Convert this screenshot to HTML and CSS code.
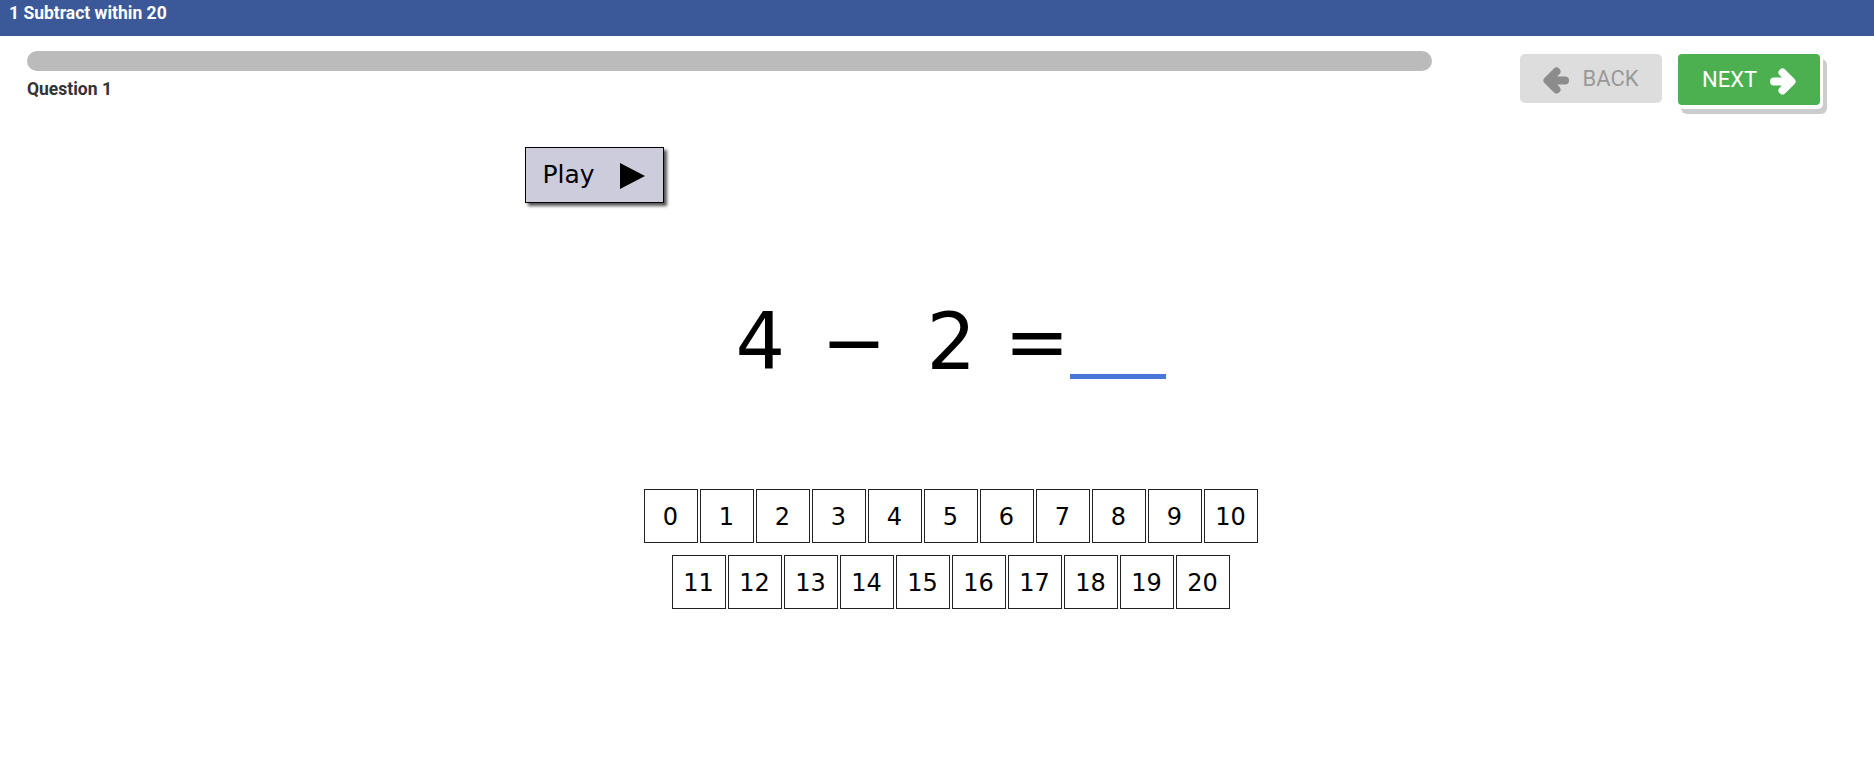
FILE: index.html
```html
<!DOCTYPE html>
<html lang="en">
<head>
  <meta charset="UTF-8">
  <meta name="viewport" content="width=device-width, initial-scale=1.0">
  <title>1 Subtract within 20</title>
  <link rel="stylesheet" href="styles.css">
</head>
<body>
  <header class="topbar">1 Subtract within 20</header>
  <main class="quiz">
    <div class="quiz-head">
      <div class="progress-wrap">
        <div class="progress"></div>
        <p class="question-label">Question 1</p>
      </div>
      <div class="nav">
        <button class="btn btn-back" type="button">
          <svg class="arrow" width="26" height="27" viewBox="0 0 26 27">
            <path d="M22 13.5H9M13.5 4.5l-9 9 9 9" />
          </svg>
          <span>BACK</span>
        </button>
        <button class="btn btn-next" type="button">
          <span>NEXT</span>
          <svg class="arrow" width="26" height="27" viewBox="0 0 26 27">
            <path d="M4 13.5h13M12.5 4.5l9 9-9 9" />
          </svg>
        </button>
      </div>
    </div>

    <div class="stage">
      <div class="play" role="button">
        <span class="play-label">Play</span>
        <svg class="play-icon" width="25" height="26" viewBox="0 0 25 26">
          <polygon points="0,0 25,13 0,26" />
        </svg>
      </div>

      <div class="equation">
        <span class="term t-a">4</span>
        <span class="term t-op">&minus;</span>
        <span class="term t-b">2</span>
        <span class="term t-eq">=</span>
        <span class="blank"></span>
      </div>

      <div class="answers" id="answers"></div>
    </div>
  </main>

  <script>
    // answer tiles 0..20 in two rows
    const answers = document.getElementById('answers');
    [[0, 10], [11, 20]].forEach(([from, to]) => {
      const row = document.createElement('div');
      row.className = 'answer-row';
      for (let n = from; n <= to; n++) {
        const tile = document.createElement('div');
        tile.className = 'tile';
        tile.textContent = n;
        row.appendChild(tile);
      }
      answers.appendChild(row);
    });
  </script>
</body>
</html>
```

FILE: styles.css
```css
* {
  margin: 0;
  padding: 0;
  box-sizing: border-box;
}

body {
  font-family: Roboto, 'Liberation Sans', sans-serif;
  background: #fff;
  color: #000;
}

.topbar {
  height: 36px;
  padding: 3px 9px 0;
  background: #3b5998;
  color: #fff;
  font-size: 17.5px;
  font-weight: 700;
}

.quiz {
  padding: 15px 0 0 27px;
}

.quiz-head {
  display: flex;
  padding-right: 54px;
}

.progress-wrap {
  flex: 1;
}
.progress {
  height: 20px;
  border-radius: 10px;
  background: #bbbbbb;
}
.question-label {
  margin-top: 8px;
  font-size: 17.5px;
  font-weight: 700;
  color: #333;
}

.nav {
  display: flex;
  gap: 16px;
  margin: 3px 0 0 88px;
}
.btn {
  width: 142px;
  height: 50px;
  display: flex;
  align-items: center;
  justify-content: center;
  gap: 13px;
  border: none;
  border-radius: 5px;
  font-family: Roboto, sans-serif;
  font-size: 22px;
  cursor: pointer;
}
.btn .arrow {
  margin-top: 3px;
  fill: none;
  stroke-width: 8;
  stroke-linecap: round;
  stroke-linejoin: round;
}
.btn-back {
  height: 49px;
  background: #dddddd;
  color: #999;
}
.btn-back .arrow {
  stroke: #8c8c8c;
}
.btn-next {
  height: 51px;
  border-radius: 4px;
  background: #4caf50;
  color: #fff;
  box-shadow: 2px 3px 0 1px #fff, 5px 7px 0 2px #cccccc;
}
.btn-next .arrow {
  stroke: #fff;
}

.stage {
  width: 900px;
  margin: 0 auto;
  display: flex;
  flex-direction: column;
}

.play {
  align-self: flex-start;
  margin: 42px 0 0 24px;
  width: 139px;
  height: 56px;
  display: flex;
  align-items: flex-start;
  padding-left: 17px;
  background: #ccccdd;
  border: 1px solid #000;
  box-shadow: 3px 3px 3px #555;
  font-family: 'DejaVu Sans', Verdana, sans-serif;
  font-size: 25px;
  color: #000;
  cursor: pointer;
}
.play-label {
  margin-top: 13px;
  line-height: 27px;
}
.play-icon {
  margin: 15px 0 0 25px;
}

.equation {
  margin-top: 94px;
  display: flex;
  justify-content: center;
  align-items: baseline;
  font-family: 'DejaVu Sans', Verdana, sans-serif;
  font-size: 78px;
  line-height: 91px;
}
.t-op {
  margin-left: 36px;
}
.t-b {
  margin-left: 40px;
}
.t-eq {
  margin-left: 28px;
}
.blank {
  display: inline-block;
  width: 96px;
  border-bottom: 5px solid #4876d9;
  position: relative;
  top: 10px;
}

.answers {
  margin-top: 101px;
  display: flex;
  flex-direction: column;
  align-items: center;
  gap: 12px;
}
.answer-row {
  display: flex;
  gap: 2px;
}
.tile {
  width: 54px;
  height: 54px;
  display: flex;
  align-items: center;
  justify-content: center;
  padding-top: 2px;
  border: 1px solid #222;
  font-family: 'DejaVu Sans', Verdana, sans-serif;
  font-size: 24px;
}
```
